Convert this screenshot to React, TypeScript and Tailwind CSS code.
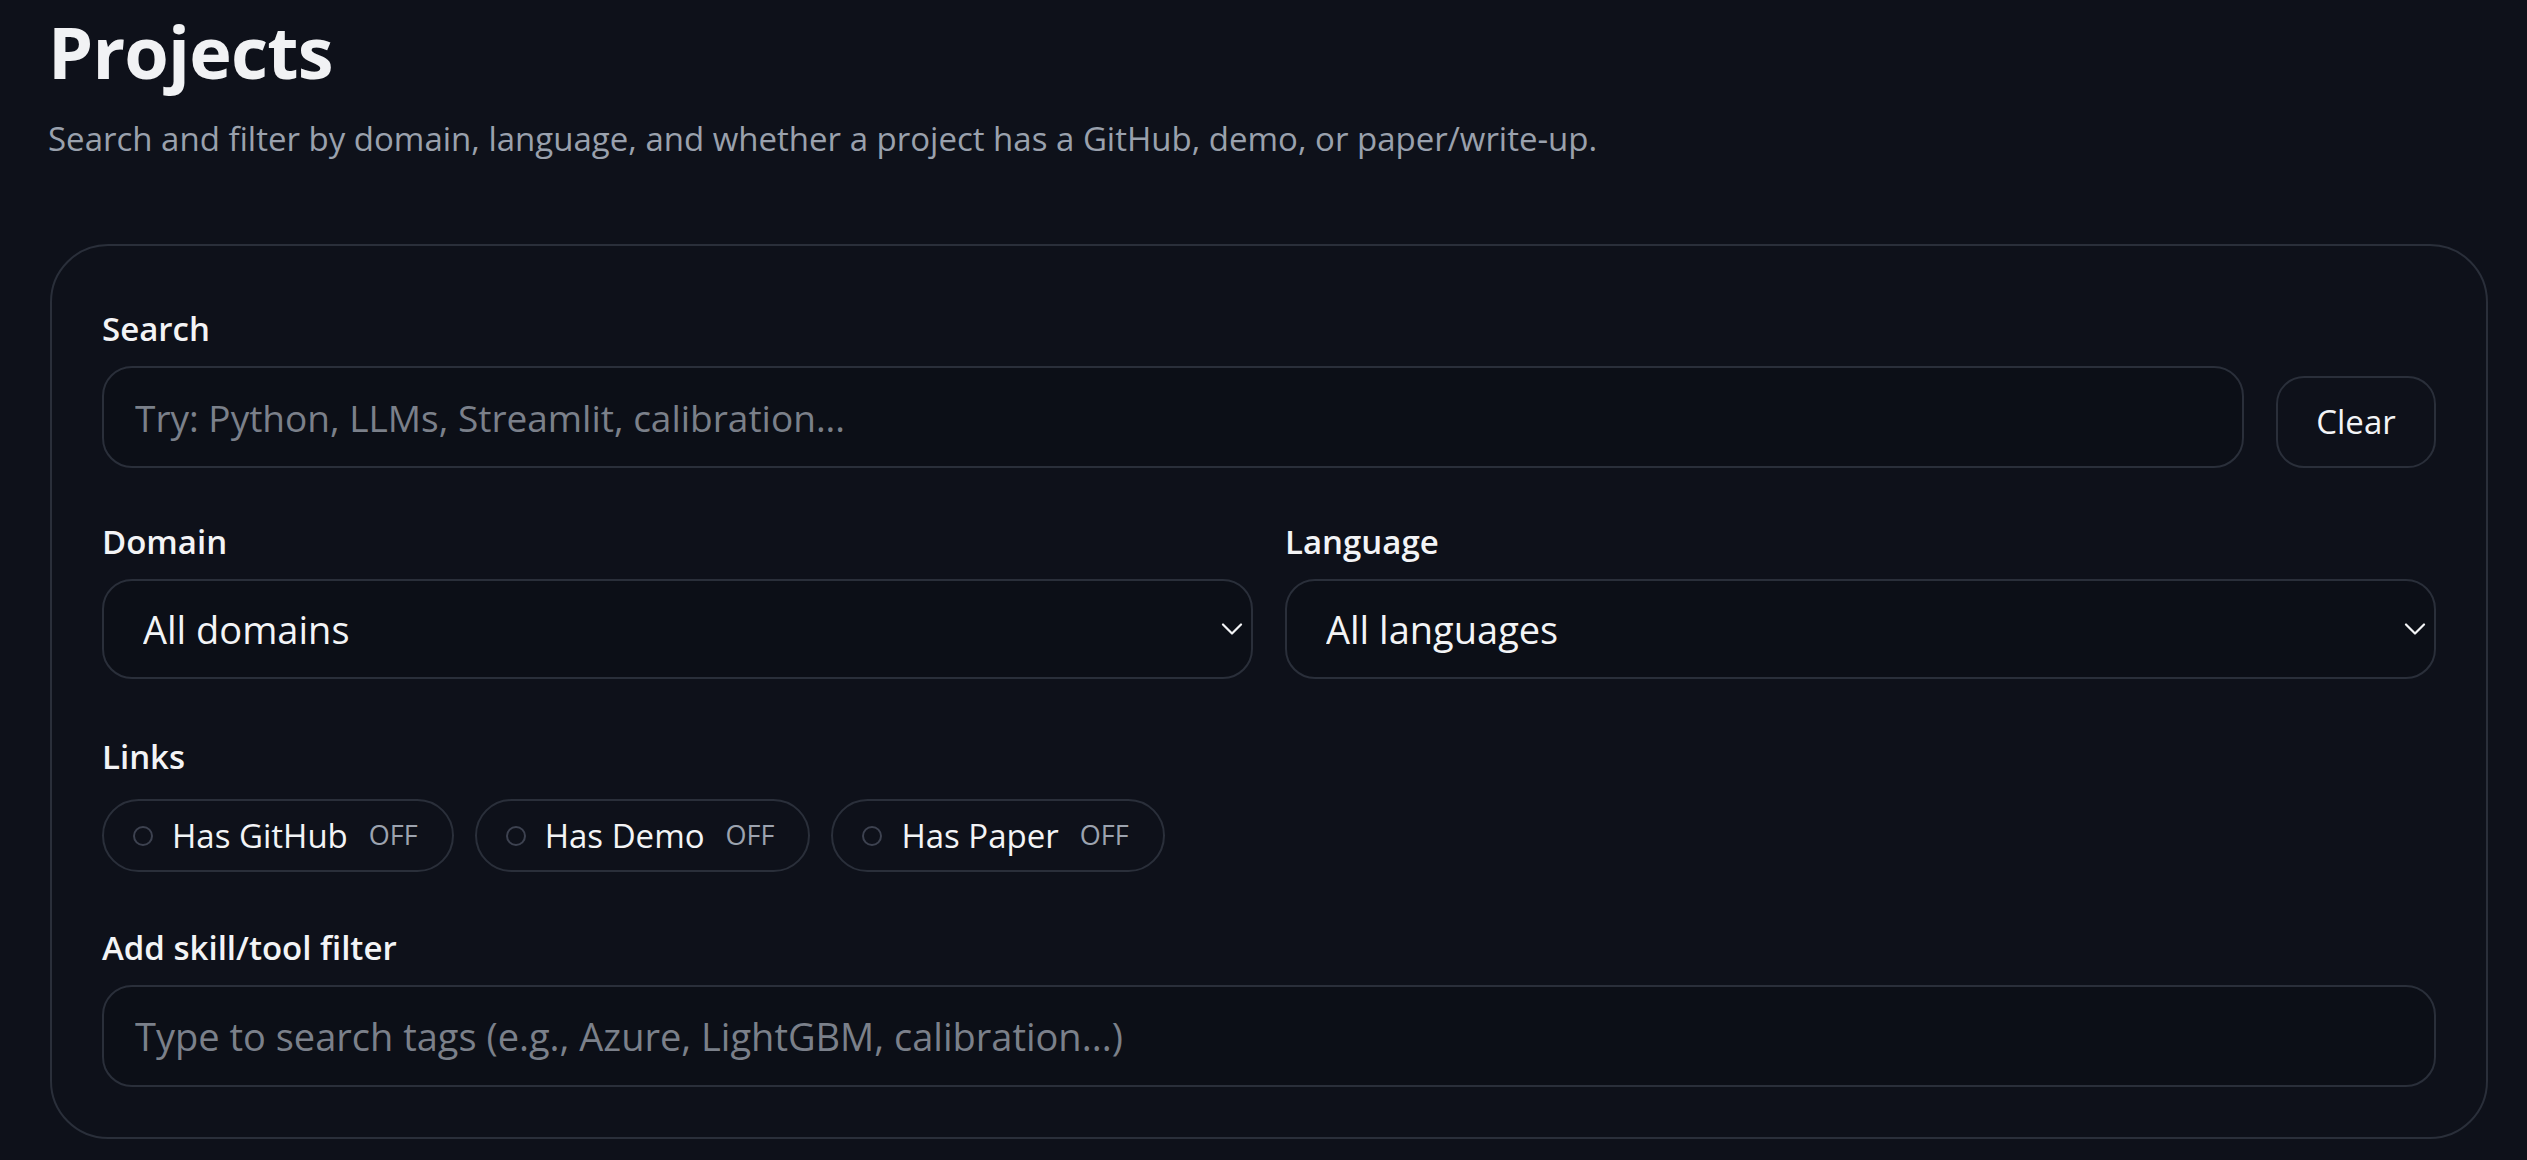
import { useState } from "react";

type LinkKey = "github" | "demo" | "paper";

const linkFilters: { key: LinkKey; label: string }[] = [
  { key: "github", label: "Has GitHub" },
  { key: "demo", label: "Has Demo" },
  { key: "paper", label: "Has Paper" },
];

function Chevron() {
  return (
    <svg
      viewBox="0 0 22 12"
      className="pointer-events-none absolute right-[10px] top-1/2 h-[12px] w-[22px] -translate-y-1/2"
      fill="none"
      stroke="#f3f4f6"
      strokeWidth="2.2"
      strokeLinecap="round"
      strokeLinejoin="round"
    >
      <path d="M2 1.5 11 10.5 20 1.5" />
    </svg>
  );
}

function FieldLabel({ children }: { children: React.ReactNode }) {
  return <div className="mb-[17px] text-[33px] leading-[40px] font-semibold text-[#f3f4f6]">{children}</div>;
}

export default function App() {
  const [query, setQuery] = useState("");
  const [tag, setTag] = useState("");
  const [links, setLinks] = useState<Record<LinkKey, boolean>>({ github: false, demo: false, paper: false });

  return (
    <div className="min-h-screen bg-[#0e111a] pt-[15px] pl-[48px] pr-[39px] font-['Open_Sans',sans-serif] text-[#f3f4f6]">
      <h1 className="text-[72px] leading-none font-bold tracking-[-0.8px] text-[#f1f2f4]">Projects</h1>
      <p className="mt-[32px] text-[33px] leading-[40px] text-[#9aa1ad]">
        Search and filter by domain, language, and whether a project has a GitHub, demo, or paper/write-up.
      </p>

      <section className="mt-[85px] ml-[2px] rounded-[58px] border-2 border-[#2a2f3a] px-[50px] pt-[63px] pb-[50px]">
        <FieldLabel>Search</FieldLabel>
        <div className="flex items-end gap-[32px]">
          <input
            value={query}
            onChange={(e) => setQuery(e.target.value)}
            placeholder="Try: Python, LLMs, Streamlit, calibration..."
            className="h-[102px] flex-1 rounded-[30px] border-2 border-[#2a2f3a] bg-[#0c0f17] pl-[31px] text-[37px] text-[#f3f4f6] outline-none placeholder:text-[#7b808a]"
          />
          <button
            onClick={() => setQuery("")}
            className="h-[92px] w-[160px] rounded-[28px] border-2 border-[#2a2f3a] text-[33px] text-[#f3f4f6]"
          >
            Clear
          </button>
        </div>

        <div className="mt-[54px] grid grid-cols-2 gap-[32px]">
          <div>
            <FieldLabel>Domain</FieldLabel>
            <div className="relative">
              <select className="h-[100px] w-full appearance-none rounded-[30px] border-2 border-[#2a2f3a] bg-[#0c0f17] pl-[39px] text-[38px] text-[#f3f4f6] outline-none">
                <option>All domains</option>
              </select>
              <Chevron />
            </div>
          </div>
          <div>
            <FieldLabel>Language</FieldLabel>
            <div className="relative">
              <select className="h-[100px] w-full appearance-none rounded-[30px] border-2 border-[#2a2f3a] bg-[#0c0f17] pl-[39px] text-[38px] text-[#f3f4f6] outline-none">
                <option>All languages</option>
              </select>
              <Chevron />
            </div>
          </div>
        </div>

        <div className="mt-[58px]">
          <div className="mb-[22px] text-[33px] leading-[40px] font-semibold text-[#f3f4f6]">Links</div>
          <div className="flex gap-[21px]">
            {linkFilters.map((f) => (
              <button
                key={f.key}
                onClick={() => setLinks((s) => ({ ...s, [f.key]: !s[f.key] }))}
                className="flex h-[73px] items-center rounded-full border-2 border-[#2a2f3a] pl-[29px] pr-[34px]"
              >
                <span className="h-[20px] w-[20px] rounded-full border-2 border-[#3d4250]" />
                <span className="ml-[19px] text-[33px] text-[#f3f4f6]">{f.label}</span>
                <span className="ml-[21px] text-[27px] text-[#9ca3af]">{links[f.key] ? "ON" : "OFF"}</span>
              </button>
            ))}
          </div>
        </div>

        <div className="mt-[56px]">
          <FieldLabel>Add skill/tool filter</FieldLabel>
          <input
            value={tag}
            onChange={(e) => setTag(e.target.value)}
            placeholder="Type to search tags (e.g., Azure, LightGBM, calibration...)"
            className="h-[102px] w-full rounded-[30px] border-2 border-[#2a2f3a] bg-[#0c0f17] pl-[31px] text-[38px] text-[#f3f4f6] outline-none placeholder:text-[#7b808a]"
          />
        </div>
      </section>
    </div>
  );
}
